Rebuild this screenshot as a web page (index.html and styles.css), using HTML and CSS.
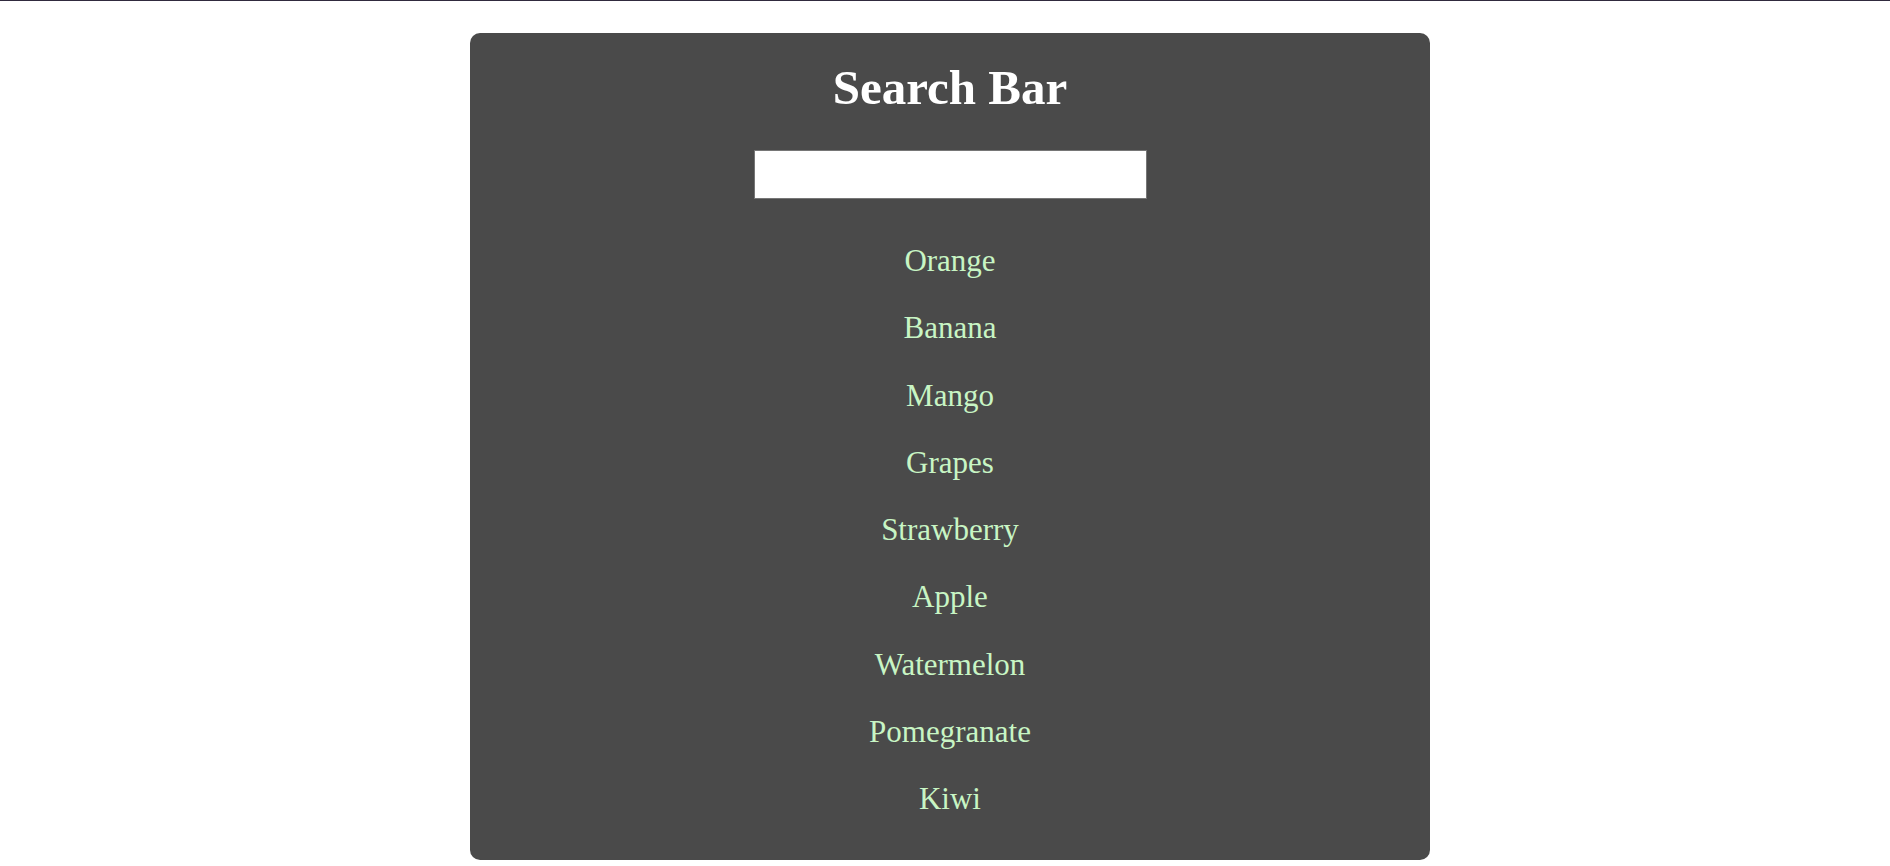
FILE: index.html
```html
<!DOCTYPE html>
<html lang="en">
<head>
<meta charset="utf-8">
<title>Search Bar</title>
<link rel="stylesheet" href="styles.css">
</head>
<body>
<div class="panel">
  <h1 class="title">Search Bar</h1>
  <input class="search" type="text">
  <ul class="list">
    <li class="item">Orange</li>
    <li class="item">Banana</li>
    <li class="item">Mango</li>
    <li class="item">Grapes</li>
    <li class="item">Strawberry</li>
    <li class="item">Apple</li>
    <li class="item">Watermelon</li>
    <li class="item">Pomegranate</li>
    <li class="item">Kiwi</li>
  </ul>
</div>
</body>
</html>
```
FILE: styles.css
```css
html, body {
  margin: 0;
  padding: 0;
}
body {
  background: #ffffff;
  border-top: 1px solid #302a3e;
  padding-left: 10px;
  font-family: "Liberation Serif", "Times New Roman", serif;
}
.panel {
  width: 960px;
  box-sizing: border-box;
  margin: 32px auto 20px;
  background: #4a4a4a;
  border-radius: 10px;
  padding: 28px 0 27px;
  display: flex;
  flex-direction: column;
  align-items: center;
}
.title {
  margin: 0;
  font-size: 49px;
  line-height: 54px;
  font-weight: bold;
  color: #ffffff;
}
.search {
  margin: 35px 0 0;
  width: 393px;
  height: 49px;
  box-sizing: border-box;
  border: 1px solid #767676;
  background: #ffffff;
  padding: 0;
  outline: none;
}
.list {
  list-style: none;
  margin: 28px 0 0;
  padding: 0;
  text-align: center;
}
.item {
  font-size: 31px;
  line-height: 67.3px;
  color: #c8f5c4;
}
```
